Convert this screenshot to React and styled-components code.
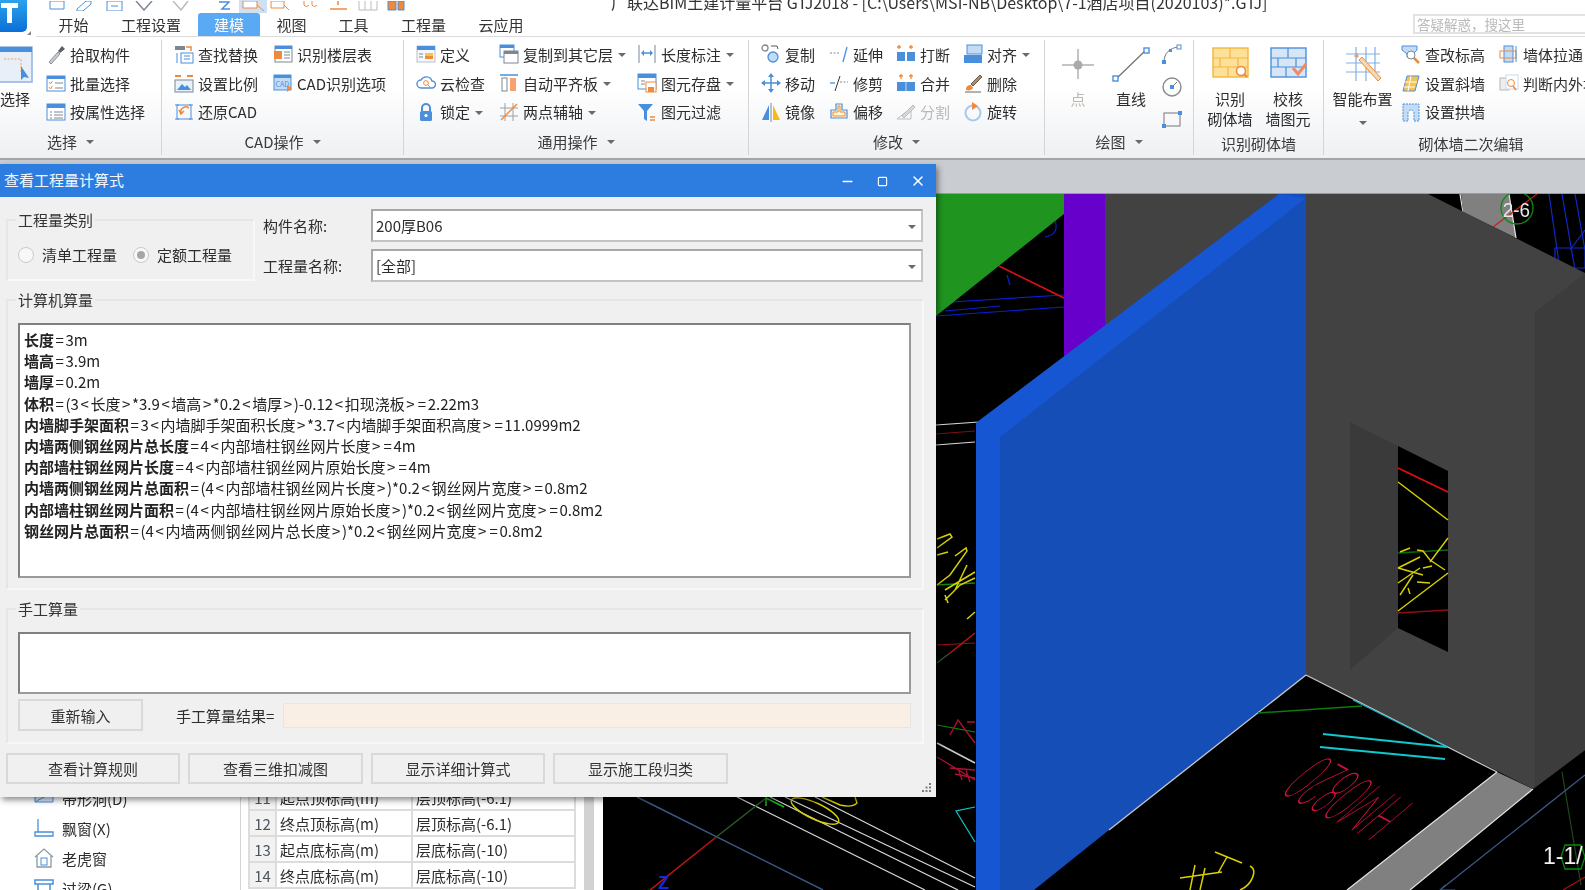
import React from "react";
import styled, { createGlobalStyle } from "styled-components";
import { Minus, Square, X } from "lucide-react";

const GlobalStyle = createGlobalStyle`
  html, body {
    margin: 0;
    padding: 0;
    background: #fff;
    overflow: hidden;
  }
  body {
    font-family: "Noto Sans CJK SC", "Noto Sans", sans-serif;
    font-size: 15px;
    color: #2d2d2d;
  }
`;

const Page = styled.div`
  position: relative;
  width: 1585px;
  height: 890px;
  overflow: hidden;
  display: flex;
  flex-direction: column;
  filter: blur(0.5px);
`;

const Top = styled.div`
  display: flex;
  height: 37px;
  flex: none;
`;

const LogoBox = styled.div`
  position: relative;
  width: 36px;
  flex: none;
`;

const Right = styled.div`
  flex: 1;
  display: flex;
  flex-direction: column;
  min-width: 0;
  border-bottom: 1px solid #dcdcdc;
`;

const Quick = styled.div`
  height: 13px;
  display: flex;
  align-items: flex-end;
  overflow: hidden;
  padding-left: 13px;
  flex: none;
`;

const QuickSlot = styled.span`
  display: flex;
  justify-content: center;
  align-items: flex-end;
  flex: none;
  width: ${(p) => p.$w}px;
  margin-left: ${(p) => p.$gap || 0}px;
  height: 20px;
  padding-bottom: 2px;
  box-sizing: border-box;
  background: ${(p) => (p.$on ? "#cfe0f3" : "transparent")};
`;

const Title = styled.span`
  margin-left: 206px;
  line-height: 22px;
  font-size: 16px;
  white-space: nowrap;
  color: #333;
`;

const TabRow = styled.div`
  flex: 1;
  display: flex;
  padding-left: 7px;
  align-items: stretch;
`;

const Tab = styled.div`
  width: ${(p) => p.$w}px;
  margin-right: 1px;
  display: flex;
  align-items: center;
  justify-content: center;
  border-radius: 3px 3px 0 0;
  background: ${(p) => (p.$on ? "#5aa9f5" : "transparent")};
  color: ${(p) => (p.$on ? "#fff" : "#333")};
`;

const Search = styled.div`
  margin-left: auto;
  width: 172px;
  height: 20px;
  margin-top: 1px;
  box-sizing: border-box;
  border: 2px solid #e2e2e2;
  border-right: none;
  padding-left: 2px;
  font-size: 13.5px;
  line-height: 16px;
  color: #b9b9b9;
`;

const Ribbon = styled.div`
  height: 121px;
  flex: none;
  display: flex;
  padding-top: 3px;
  box-sizing: border-box;
  background: linear-gradient(#fff 40%, #eef0f2);
  overflow: hidden;
`;

const RibbonEdge = styled.div`
  height: 2px;
  flex: none;
  background: #a3a6a9;
`;

const Section = styled.section`
  width: ${(p) => p.$w}px;
  flex: none;
  box-sizing: border-box;
  border-right: ${(p) => (p.$last ? "none" : "1px solid #d3d5d8")};
  display: flex;
  flex-direction: column;
  margin-bottom: 3px;
`;

const SectionBody = styled.div`
  height: 91px;
  display: flex;
  padding-left: ${(p) => p.$pl || 0}px;
`;

const SectionLabel = styled.div`
  height: 20px;
  margin-top: ${(p) => (p.$low ? 2 : 0)}px;
  padding-right: ${(p) => p.$pr || 0}px;
  display: flex;
  align-items: center;
  justify-content: center;
  gap: ${(p) => p.$gap ?? 6}px;
  color: #3a3a3a;
`;

const Caret = styled.i`
  display: inline-block;
  width: 0;
  height: 0;
  margin-left: ${(p) => p.$ml ?? 3}px;
  margin-top: 2px;
  border-left: 4px solid transparent;
  border-right: 4px solid transparent;
  border-top: 4px solid #6a6a6a;
`;

const ToolCol = styled.div`
  width: ${(p) => p.$w}px;
  flex: none;
`;

const Tool = styled.div`
  height: 28.7px;
  display: flex;
  align-items: center;
  gap: 4px;
  white-space: nowrap;
  color: ${(p) => (p.$off ? "#b8b8b8" : "#2d2d2d")};
`;

const BigTool = styled.div`
  width: ${(p) => p.$w}px;
  flex: none;
  text-align: center;
  line-height: 20px;
  color: ${(p) => (p.$off ? "#c2b8b0" : "#2d2d2d")};
`;

const BigIcon = styled.div`
  height: 49px;
  display: flex;
  align-items: ${(p) => (p.$pin ? "flex-start" : "center")};
  justify-content: ${(p) => (p.$pin ? "flex-start" : "center")};
  padding-top: ${(p) => (p.$pin ? 6 : 0)}px;
  box-sizing: border-box;
`;

const BigLeft = styled.div`
  text-align: left;
`;

const SideIcons = styled.div`
  display: flex;
  flex-direction: column;
  height: 88px;
  justify-content: space-between;
  padding-top: 3px;
  margin-left: 2px;
`;

const GrayBar = styled.div`
  height: 33px;
  flex: none;
  background: #c9ccd1;
`;

const Work = styled.div`
  flex: 1;
  display: flex;
  min-height: 0;
  border-top: 1px solid #9a9a9a;
`;

const Tree = styled.div`
  width: 241px;
  flex: none;
  box-sizing: border-box;
  border-right: 1px solid #d5d5d5;
  display: flex;
  flex-direction: column;
  justify-content: flex-end;
  overflow: hidden;
  padding-left: 34px;
`;

const TreeRow = styled.div`
  height: 30px;
  flex: none;
  display: flex;
  align-items: center;
  gap: 8px;
  margin-bottom: ${(p) => (p.$end ? -13 : 0)}px;
`;

const Props = styled.div`
  width: 362px;
  flex: none;
  display: flex;
  background: #fff;
  padding-left: 7px;
  box-sizing: border-box;
`;

const PropTable = styled.div`
  width: 328px;
  display: flex;
  flex-direction: column;
  justify-content: flex-end;
  padding-bottom: 1px;
`;

const PropRow = styled.div`
  height: 26px;
  display: grid;
  grid-template-columns: 27px 136px 1fr;
  box-sizing: border-box;
  border-top: 2px solid #dcdcdc;
  &:last-child {
    border-bottom: 2px solid #dcdcdc;
    height: 28px;
  }
`;

const PropCell = styled.div`
  display: flex;
  align-items: center;
  justify-content: ${(p) => (p.$num ? "center" : "flex-start")};
  padding-left: ${(p) => (p.$num ? 0 : 3)}px;
  border-left: 2px solid #dcdcdc;
  border-right: ${(p) => (p.$end ? "2px solid #dcdcdc" : "none")};
  background: ${(p) => (p.$num ? "#f2f2f2" : "#fff")};
  color: ${(p) => (p.$num ? "#4b5560" : "#2d2d2d")};
  white-space: nowrap;
  overflow: hidden;
`;

const Scroll = styled.div`
  width: 10px;
  flex: none;
  margin-left: 8px;
  background: #d2d2d2;
`;

const Canvas = styled.div`
  flex: 1;
  background: #000;
  overflow: hidden;
  svg {
    display: block;
  }
`;

const Dialog = styled.div`
  position: absolute;
  left: 0;
  top: 164px;
  width: 936px;
  height: 633px;
  background: #f0f0f0;
  box-shadow: 2px 3px 6px rgba(0, 0, 0, 0.45);
  display: flex;
  flex-direction: column;
`;

const DialogBar = styled.div`
  height: 33px;
  flex: none;
  background: #2d7de0;
  color: #f2f7fd;
  display: flex;
  align-items: center;
  padding: 0 0 2px 4px;
  box-sizing: border-box;
`;

const BarButtons = styled.div`
  margin-left: auto;
  display: flex;
  align-items: center;
  gap: 22px;
  padding: 3px 10px 0 0;
`;

const DialogBody = styled.div`
  flex: 1;
  padding: 13px 12px 0 6px;
  position: relative;
  display: flex;
  flex-direction: column;
`;

const TopPart = styled.div`
  display: flex;
  height: 80px;
`;

const Frame = styled.fieldset`
  margin: 0;
  padding: 0;
  box-sizing: border-box;
  border: 2px solid #f8f8f8;
  border-top-color: #e6e6e6;
  border-left-color: #e6e6e6;
  width: ${(p) => p.$w}px;
  height: ${(p) => p.$h}px;
  margin-top: ${(p) => p.$mt || 0}px;
  min-width: 0;
  flex: none;
  legend {
    margin-left: 8px;
    padding: 0 2px;
    line-height: 20px;
    color: #333;
  }
`;

const RadioRow = styled.div`
  display: flex;
  align-items: center;
  padding: 14px 0 0 10px;
`;

const Radio = styled.span`
  width: 14px;
  height: 14px;
  border-radius: 50%;
  border: 1px solid #c8c8c8;
  background: #f8f8f8;
  position: relative;
  flex: none;
  margin-left: ${(p) => p.$ml || 0}px;
  margin-right: 8px;
  &::after {
    content: "";
    display: ${(p) => (p.$on ? "block" : "none")};
    position: absolute;
    inset: 3px;
    border-radius: 50%;
    background: #a6a6a6;
  }
`;

const Fields = styled.div`
  margin-left: 8px;
  margin-top: -1px;
  flex: 1;
  display: flex;
  flex-direction: column;
  gap: 7px;
`;

const Field = styled.div`
  display: flex;
  align-items: center;
  height: 33px;
`;

const FieldName = styled.span`
  width: 108px;
  flex: none;
`;

const Combo = styled.div`
  width: 552px;
  height: 100%;
  box-sizing: border-box;
  background: #fff;
  border: 2px solid #c4c4c4;
  border-top-color: #a8a8a8;
  border-left-color: #a8a8a8;
  display: flex;
  align-items: center;
  padding: 0 5px 0 3px;
  justify-content: space-between;
`;

const Sheet = styled.div`
  background: #fff;
  box-sizing: border-box;
  border: 2px solid #808080;
  border-right-color: #9a9a9a;
  border-bottom-color: #9a9a9a;
  width: 893px;
  height: ${(p) => p.$h}px;
  margin-left: 10px;
  margin-top: ${(p) => p.$mt || 0}px;
  padding: 4px 4px;
  line-height: 21.2px;
  white-space: nowrap;
  color: #222;
`;

const Name = styled.b`
  font-weight: 700;
`;

const Sym = styled.span`
  margin: 0 1.6px;
`;

const ManualRow = styled.div`
  display: flex;
  align-items: center;
  height: 32px;
  margin-top: 5px;
  margin-left: 10px;
`;

const FlatButton = styled.div`
  width: ${(p) => p.$w}px;
  height: ${(p) => p.$h || 31}px;
  flex: none;
  box-sizing: border-box;
  border: 2px solid #d9d9d9;
  display: flex;
  align-items: center;
  justify-content: center;
  margin-right: ${(p) => p.$mr || 0}px;
  color: #333;
`;

const ResultLabel = styled.span`
  margin-left: 33px;
  width: 107px;
  flex: none;
  white-space: nowrap;
`;

const ResultBox = styled.div`
  width: 628px;
  height: 25px;
  box-sizing: border-box;
  background: #f9efe5;
  border: 1px solid #e6e6e6;
`;

const Footer = styled.div`
  display: flex;
  margin-top: 9px;
`;

const Grip = styled.span`
  position: absolute;
  right: 4px;
  bottom: 4px;
  line-height: 0;
`;

/* ribbon icons */
const B = "#4a8fdc";
const L = "#c3dbf4";
const O = "#ef8a3c";
const D = "#7b8794";
const Y = "#f7c24e";

const icons = {
  pick: (<><path d="M3 18l9-10 2 2-9 10z" fill="#c9ccd0" stroke="#8a8f96" /><path d="M12 7l4-5 3 3-5 4z" fill="#5b5f66" /></>),
  batch: (<><rect x="1" y="3" width="18" height="15" fill="#fff" stroke={B} /><rect x="1" y="3" width="18" height="3" fill={B} /><path d="M3 9l1.5 2 2-3M3 14l1.5 2 2-3" stroke={O} fill="none" /><path d="M9 10h8M9 15h8" stroke={D} /></>),
  attr: (<><rect x="1" y="2" width="18" height="16" fill="#fff" stroke={B} /><rect x="1" y="2" width="18" height="4" fill={B} /><path d="M4 10h2M8 10h9M4 13h2M8 13h9M4 16h2M8 16h9" stroke={D} /></>),
  find: (<><rect x="1" y="2" width="10" height="4" fill={D} /><path d="M12 3h5v4" stroke={O} fill="none" strokeWidth="1.5" /><rect x="7" y="9" width="12" height="10" fill="#fff" stroke={B} /><path d="M10 12h6M10 15h6M3 9v10" stroke={B} /></>),
  floors: (<><rect x="2" y="2" width="17" height="16" fill="#fff" stroke={D} /><rect x="2" y="2" width="17" height="3" fill={B} /><rect x="1" y="7" width="8" height="8" fill={O} /><path d="M11 8h6M11 11h6M11 14h6" stroke={D} /></>),
  scale: (<><path d="M1 3h6M13 3h6" stroke={O} strokeWidth="2" /><rect x="1" y="7" width="18" height="12" fill="#e9f1fa" stroke={D} /><path d="M3 17l5-6 3 3 2-2 4 5z" fill={B} /></>),
  cadopt: (<><rect x="1" y="2" width="17" height="15" fill={L} stroke={B} /><rect x="1" y="2" width="17" height="3" fill={B} /><text x="2.5" y="14" fontSize="7" fill={B}>CAD</text><path d="M14 12l5 3-5 4z" fill={O} /></>),
  restore: (<><rect x="3" y="3" width="14" height="14" fill="none" stroke={B} /><path d="M1 3h4M1 17h4M15 3h4M15 17h4" stroke={B} /><path d="M15 6a5 5 0 0 0-8 5M5 8l2 4 3-3" stroke={O} strokeWidth="1.6" fill="none" /></>),
  define: (<><rect x="1" y="2" width="18" height="16" fill="#f5f7fa" stroke="#b9c0c8" /><rect x="1" y="2" width="18" height="4" fill={B} /><rect x="9" y="9" width="8" height="3" fill={Y} /><rect x="9" y="12" width="8" height="3" fill={O} /><path d="M3 10h4M3 13h4" stroke={D} /></>),
  cloud: (<><path d="M5 15a4 4 0 0 1 0-8 6 6 0 0 1 11 1 3.5 3.5 0 0 1 0 7z" fill="#fff" stroke={B} strokeWidth="1.4" /><circle cx="10" cy="10" r="2.4" fill="none" stroke={O} /><path d="M12 12l2 2" stroke={O} /></>),
  lock: (<><path d="M6 9V6a4 4 0 0 1 8 0v3" fill="none" stroke={B} strokeWidth="2" /><rect x="4" y="9" width="12" height="10" rx="1.5" fill={B} /><circle cx="10" cy="13.5" r="1.6" fill="#fff" /></>),
  copylayer: (<><rect x="1" y="1" width="14" height="12" fill="#fff" stroke={B} /><rect x="1" y="1" width="14" height="3" fill={B} /><rect x="5" y="7" width="14" height="12" fill="#fff" stroke={D} /><rect x="5" y="7" width="14" height="3" fill={D} /></>),
  autoalign: (<><path d="M1 2h18" stroke={B} strokeWidth="1.5" /><rect x="3" y="5" width="5" height="13" fill="#fff" stroke={D} /><rect x="11" y="5" width="6" height="13" fill="#f7a173" /></>),
  twopoint: (<><path d="M6 1v18M14 1v18M1 6h18M1 14h18" stroke="#9aa0a7" /><path d="M2 18L18 2" stroke={O} strokeWidth="1.4" /></>),
  dim: (<><path d="M2 1v18M18 1v18" stroke={D} /><path d="M5 9h10" stroke={B} strokeWidth="1.5" /><path d="M4 9l3-3v6zM16 9l-3-3v6z" fill={B} /></>),
  save: (<><rect x="1" y="1" width="18" height="15" fill="#fff" stroke={B} /><rect x="1" y="1" width="18" height="4" fill={B} /><path d="M4 8h4M4 11h4" stroke={D} /><rect x="9" y="9" width="10" height="10" fill="#fff" stroke={O} /><rect x="11" y="14" width="6" height="5" fill={O} /></>),
  filter: (<><path d="M1 2h15l-6 7v10l-3-2V9z" fill={B} /><path d="M13 15h5M13 18h5" stroke={O} strokeWidth="1.5" /></>),
  copy: (<><circle cx="4" cy="4" r="3" fill="none" stroke={D} strokeWidth="1.3" /><circle cx="12" cy="13" r="5" fill={L} stroke={B} strokeWidth="1.3" /><path d="M10 2h6l1 3" fill="none" stroke="#555" /></>),
  extend: (<><path d="M1 9h9" stroke="#7f8a96" strokeDasharray="2 1.5" /><path d="M14 18l4-15" stroke={B} strokeWidth="1.3" /></>),
  trim: (<><path d="M1 10h5" stroke={B} strokeWidth="1.3" /><path d="M6 18l5-15" stroke="#333" /><path d="M11 9h8" stroke="#7f8a96" strokeDasharray="2 1.5" /></>),
  move: (<><path d="M10 3v14M3 10h14" stroke={B} strokeWidth="1.5" /><path d="M10 0l3 4H7zM10 20l3-4H7zM0 10l4-3v6zM20 10l-4-3v6z" fill={B} /></>),
  mirror: (<><path d="M8 3v15H1z" fill={B} /><path d="M10 1v19" stroke={D} /><path d="M12 3v15h7z" fill="#fdb913" /></>),
  offset: (<><path d="M7 2h6v6h5v8H2V8h5z" fill="#fff6d8" stroke={B} strokeWidth="1.2" /><path d="M9 4h2v6h5v4H4v-4h5z" fill="none" stroke={O} /></>),
  breakit: (<><path d="M3 1v4M1 3h4M15 1v4M13 3h4" stroke={O} strokeWidth="1.3" /><rect x="1" y="8" width="8" height="9" fill={B} /><rect x="11" y="8" width="8" height="9" fill={B} /></>),
  merge: (<><path d="M5 1v5M3 3h4M15 1v5M13 3h4" stroke={O} strokeWidth="1.3" /><rect x="1" y="9" width="18" height="9" fill={B} /><path d="M10 9v9" stroke={L} /></>),
  split: (<><path d="M1 17h14L15 6z" fill="none" stroke="#b9bcc0" /><path d="M6 14L17 3l2 2L8 16z" fill="#d6d8da" stroke="#b9bcc0" /></>),
  align: (<><rect x="4" y="1" width="15" height="9" fill={L} stroke={B} /><rect x="1" y="11" width="18" height="8" fill={B} /></>),
  del: (<><path d="M2 19h16" stroke="#666" /><path d="M3 17c0-4 2-5 5-5l2 3c-1 2-4 3-7 2z" fill={O} /><path d="M8 11l9-9 2 2-9 9z" fill="#a88d70" stroke="#6a5a48" /></>),
  rotate: (<><circle cx="10" cy="11" r="7.5" fill="none" stroke="#a8c9ee" strokeWidth="2" /><path d="M9 0l6 4-6 4z" fill={O} /></>),
  point: (<><path d="M18 2v30M2 18h32" stroke="#c4c4c4" strokeWidth="2" /><circle cx="18" cy="18" r="4.5" fill="#aaa" /></>),
  line: (<><path d="M4 33L34 4" stroke="#707070" strokeWidth="1.2" /><rect x="1" y="30" width="5" height="5" fill="#fff" stroke={B} strokeWidth="1.4" /><rect x="32" y="2" width="5" height="5" fill="#fff" stroke={B} strokeWidth="1.4" /></>),
  arc: (<><path d="M3 19c0-9 6-14 14-15" fill="none" stroke="#777" /><rect x="1" y="17" width="4" height="4" fill={B} /><rect x="8" y="6" width="3" height="3" fill={B} /><rect x="16" y="2" width="4" height="4" fill="#fff" stroke={B} /></>),
  circle: (<><circle cx="11" cy="11" r="9" fill="none" stroke="#8a8a8a" strokeWidth="1.4" /><rect x="9" y="9" width="4" height="4" fill={B} /><path d="M13 9l3-3" stroke="#777" /></>),
  rect: (<><rect x="3" y="4" width="16" height="13" fill="none" stroke="#777" /><rect x="1" y="15" width="4" height="4" fill={B} /><rect x="17" y="2" width="4" height="4" fill={B} /></>),
  wallFind: (<><rect x="1" y="2" width="35" height="29" fill="#fde09a" stroke="#f4b73b" strokeWidth="1.4" /><path d="M1 12h35M1 21h35M18 2v10M8 12v9M26 12v9M16 21v10" stroke="#f4b73b" strokeWidth="1.2" /><circle cx="29" cy="25" r="4.5" fill="#fff" stroke={O} strokeWidth="1.6" /><path d="M32 28l3 3" stroke={O} strokeWidth="2" /></>),
  wallCheck: (<><rect x="1" y="2" width="35" height="29" fill="#d7e6f7" stroke={B} strokeWidth="1.4" /><path d="M1 12h35M1 21h35M18 2v10M8 12v9M26 12v9M16 21v10" stroke={B} strokeWidth="1.2" /><path d="M23 22l5 6 8-10" fill="none" stroke="#f08a62" strokeWidth="3" /></>),
  smart: (<><path d="M3 9h34M3 18h34M3 27h34M13 2v34M23 2v34M32 2v26" stroke="#7fb1e6" strokeWidth="1.2" /><path d="M16 15l19 21 3-3L19 12z" fill="#f3d9b0" stroke={O} /><path d="M14 8v5M11 11h5" stroke={O} /></>),
  elev: (<><path d="M1 2h15v4l-4 4v3H6v-3L1 6z" fill={L} stroke={B} /><circle cx="10" cy="11" r="4" fill="#fff" stroke={D} /><path d="M13 14l5 5" stroke={O} strokeWidth="2.5" /></>),
  slant: (<><path d="M6 3h12l-4 15H2z" fill={Y} stroke={B} /><path d="M4 9h12M3 14h11M10 3L7 18" stroke="#fff" /></>),
  arch: (<><path d="M2 2h16v17h-5v-8a3 3 0 0 0-6 0v8H2z" fill={L} stroke={B} strokeDasharray="2 1" /></>),
  pull: (<><rect x="5" y="2" width="9" height="16" fill={L} stroke={B} /><rect x="1" y="7" width="16" height="7" fill="none" stroke={O} /><path d="M17 2v16" stroke={B} /></>),
  inout: (<><rect x="1" y="5" width="9" height="12" fill="#eee" stroke="#b0b8c0" /><rect x="7" y="2" width="12" height="14" fill="#fff" stroke={L} /><circle cx="12" cy="10" r="3.5" fill="none" stroke={O} /><path d="M14 13l3 4" stroke={O} strokeWidth="1.6" /></>),
  band: (<><path d="M1 2h18v12H1z" fill="#dce9f8" stroke={B} /><path d="M1 14L19 4" stroke={B} /></>),
  bay: (<><path d="M4 1v13h12M1 14h18v4H1z" fill="none" stroke={B} strokeWidth="1.3" /></>),
  dormer: (<><path d="M1 9l9-8 9 8M3 8v11h14V8" fill="none" stroke="#8a9aa8" strokeWidth="1.3" /><rect x="7" y="10" width="6" height="7" fill="none" stroke={B} /></>),
  lintel: (<><path d="M1 2h18v4H1zM4 6v12M16 6v12" fill="none" stroke={B} strokeWidth="1.5" /></>),
};

const Ico = ({ n, s = 20, box = 20 }) => (
  <svg width={s} height={s} viewBox={`0 0 ${box} ${box}`} style={{ flex: "none" }}>
    {icons[n]}
  </svg>
);

const T = ({ n, t, arrow, off }) => (
  <Tool $off={off}>
    <Ico n={n} />
    {t}
    {arrow && <Caret $ml={1} />}
  </Tool>
);

const quickItems = [
  { w: 16, g: 0, d: <path d="M1 0h14v8H1z" fill="#fff" stroke={B} /> },
  { w: 16, g: 11, d: <path d="M1 8L10 0h5v3L7 10H1z" fill="#fff" stroke={B} /> },
  { w: 17, g: 14, d: <path d="M1 0h15v10H1zM5 5h7" fill="#fff" stroke={B} /> },
  { w: 19, g: 12, d: <path d="M1 0l8 9 8-9" fill="none" stroke={D} strokeWidth="1.5" /> },
  { w: 17, g: 18, d: <path d="M1 0l8 9 7-9" fill="none" stroke="#bbb" strokeWidth="1.5" /> },
  { w: 12, g: 29, d: <path d="M1 1h10L4 8h8" fill="none" stroke={B} strokeWidth="1.5" /> },
  { w: 28, g: 9, on: true, d: <path d="M4 0h14v7H4zM18 4l7 6" fill="#fff" stroke={O} /> },
  { w: 20, g: 3, d: <path d="M1 0h13v7H1zM14 4l5 5" fill="#fff" stroke={O} /> },
  { w: 20, g: 10, d: <path d="M4 0v4a3 3 0 0 0 5 0M12 0v4a3 3 0 0 0 5 0" fill="none" stroke={O} /> },
  { w: 19, g: 9, d: <path d="M9 0v4M1 8h17" stroke={O} strokeWidth="1.5" /> },
  { w: 20, g: 10, d: <path d="M1 0v9h18V0M7 0v9M13 0v9" fill="none" stroke="#bbb" /> },
  { w: 18, g: 9, d: <path d="M1 0h8v9H1z M11 0h6v9h-6z" fill={O} stroke={B} /> },
];

const lines = [
  ["长度", "=3m"],
  ["墙高", "=3.9m"],
  ["墙厚", "=0.2m"],
  ["体积", "=(3<长度>*3.9<墙高>*0.2<墙厚>)-0.12<扣现浇板>=2.22m3"],
  ["内墙脚手架面积", "=3<内墙脚手架面积长度>*3.7<内墙脚手架面积高度>=11.0999m2"],
  ["内墙两侧钢丝网片总长度", "=4<内部墙柱钢丝网片长度>=4m"],
  ["内部墙柱钢丝网片长度", "=4<内部墙柱钢丝网片原始长度>=4m"],
  ["内墙两侧钢丝网片总面积", "=(4<内部墙柱钢丝网片长度>)*0.2<钢丝网片宽度>=0.8m2"],
  ["内部墙柱钢丝网片面积", "=(4<内部墙柱钢丝网片原始长度>)*0.2<钢丝网片宽度>=0.8m2"],
  ["钢丝网片总面积", "=(4<内墙两侧钢丝网片总长度>)*0.2<钢丝网片宽度>=0.8m2"],
];

const rows = [
  ["11", "起点顶标高(m)", "层顶标高(-6.1)"],
  ["12", "终点顶标高(m)", "层顶标高(-6.1)"],
  ["13", "起点底标高(m)", "层底标高(-10)"],
  ["14", "终点底标高(m)", "层底标高(-10)"],
];

// the = < > signs sit wider in the original font
const spaced = (text) =>
  text.split(/([=<>])/).map((part, i) => (/^[=<>]$/.test(part) ? <Sym key={i}>{part}</Sym> : part));

function CadView() {
  return (
    <svg width="982" height="696" viewBox="603 194 982 696">
      <rect x="603" y="194" width="982" height="696" fill="#000" />
      {/* cad linework */}
      <g fill="none" strokeWidth="1.2">
        <path d="M737 797L925 890M770 797L958 890M785 797L975 887M815 797L975 878" stroke="#d8d8d8" />
        <path d="M637 797L823 890" stroke="#3a5a86" strokeWidth="1.4" />
        <path d="M766 798L715 838" stroke="#2c5a2c" strokeWidth="1.4" />
        <path d="M715 838L650 890" stroke="#c01414" strokeWidth="1.6" />
        <path d="M784 807L766 798L766 806" stroke="#16c016" strokeWidth="1.4" />
        <ellipse cx="815" cy="811" rx="26" ry="8" stroke="#d8d000" strokeWidth="1.4" transform="rotate(25 815 811)" />
        <path d="M822 797L840 805Q852 808 857 803L855 797" stroke="#d8d000" strokeWidth="1.4" />
        <path d="M975 807L956 811L975 842" stroke="#10c8c8" />
        <path d="M936 316L1064 307M951 302L1064 295M945 311L1000 306" stroke="#0a1fd0" />
        <path d="M999 266L1064 298" stroke="#e01010" strokeWidth="1.5" />
        <path d="M1007 275L1010 285M1055 220c3 10 0 15-10 17" stroke="#0a1fd0" />
        <path d="M936 425L979 422M936 445L975 442" stroke="#d8d8d8" />
        <path d="M936 434L975 431" stroke="#7a1010" />
        <path d="M937 645L975 643" stroke="#a01010" />
        <path d="M950 653L975 633" stroke="#c01414" strokeWidth="1.5" />
        <path d="M937 663L950 653" stroke="#2c5a2c" />
        <path d="M937 585L975 583" stroke="#0c8a0c" strokeWidth="1.5" />
        <path d="M937 725L975 732" stroke="#0c8a0c" />
        <path d="M950 735L958 720L975 743M967 722H975" stroke="#b01030" strokeWidth="1.3" />
        <path d="M937 743L975 763" stroke="#c8c8c8" strokeWidth="1.6" />
        <path d="M937 757L975 780M950 768L975 770M955 774L975 778M958 768L962 780M966 770L970 782" stroke="#b01030" strokeWidth="1.3" />
        <path d="M937 539L950 534L952 537L937 548M937 555L948 552M955 556L966 548L967 551L950 575L937 585M967 565L955 590M945 590L975 572M945 600L960 585L975 578M945 595L948 603M967 619L975 612" stroke="#d8d000" strokeWidth="1.5" />
        <path d="M1460 194L1463 212" stroke="#e8e8e8" />
        <path d="M1549 194L1560 270M1562 194L1575 270M1575 194L1585 250" stroke="#1028c8" />
        <path d="M1555 268h30v-20h-30zM1570 250l15-20" stroke="#1028c8" />
      </g>
      <polygon points="936,194 1089,194 936,316" fill="#1f951f" />
      <rect x="1064" y="194" width="41" height="170" fill="#6800cc" />
      <polygon points="1105,194 1306,194 1105,358" fill="#424242" />
      {/* grey slabs */}
      <polygon points="1461,194 1509,194 1516,238 1463,212" fill="#808080" />
      <polygon points="1497,772 1533,789 1410,890 1347,890" fill="#808080" />
      <path d="M1509 194L1516 238M1497 772L1347 890M1533 789L1410 890" stroke="#e4e4e4" strokeWidth="1.2" fill="none" />
      {/* wall */}
      <polygon points="1306,194 1428,194 1585,273 1585,750 1533,789 1306,675" fill="#424242" />
      <polygon points="1585,273 1535,312 1535,788 1533,789 1585,750" fill="#3c3c3c" />
      <polygon points="1350,422 1398,446 1398,628 1350,670" fill="#3a3a3a" />
      <polygon points="1398,446 1448,471 1448,652 1398,628" fill="#000" />
      <g fill="none" strokeWidth="1.4">
        <path d="M1398 468L1448 492" stroke="#e01010" strokeWidth="1.7" />
        <path d="M1398 482L1448 520" stroke="#d8d000" />
        <path d="M1398 553L1448 550" stroke="#0c6a0c" />
        <path d="M1398 613L1448 610" stroke="#8a1010" />
        <path d="M1398 611L1448 573M1430 562L1448 538M1400 552L1410 548M1417 550L1423 551L1430 560L1445 570M1398 568L1420 557M1398 568L1423 575M1398 583L1420 568M1400 595L1413 575M1408 588L1410 594M1417 582L1430 583M1423 568L1432 566" stroke="#d8d000" />
      </g>
      {/* blue slab */}
      <polygon points="976,423 1279,194 1306,194 1306,675 1109,830 1034,890 976,890" fill="#164eb8" />
      <polygon points="976,423 1279,194 1306,198 1000,437 1000,890 976,890" fill="#1656d2" />
      {/* bottom linework */}
      <g fill="none">
        <path d="M1306 675L1497 772" stroke="#c8c8c8" strokeWidth="1.3" />
        <path d="M1306 675L1109 830" stroke="#c8c8c8" strokeWidth="1.3" />
        <path d="M1353 700L1447 747" stroke="#10b8c8" strokeWidth="1.2" />
        <path d="M1323 734L1447 747M1320 747L1445 759" stroke="#10c8d0" strokeWidth="1.8" />
        <path d="M1258 713L1362 706" stroke="#0c7a0c" strokeWidth="1.4" />
        <path d="M1562 772L1581 885" stroke="#1c4a1c" strokeWidth="1.2" />
        <path d="M1585 775L1440 890" stroke="#3a5a86" strokeWidth="1.3" />
        <path d="M1445 885L1440 890L1455 890" stroke="#3a5a86" />
        <path d="M1215 852L1242 863M1227 857L1218 873M1180 878L1222 872M1195 865L1190 890M1205 868L1200 890M1250 866C1258 870 1252 885 1240 890" stroke="#d8d000" strokeWidth="1.5" />
        <path d="M1585 877L1563 890" stroke="#a01010" strokeWidth="1.3" />
        <path d="M1493 227L1537 194" stroke="#d01818" strokeWidth="1.1" />
        <circle cx="1517" cy="208" r="16" stroke="#0a8a0a" strokeWidth="1.3" />
      </g>
      <text transform="matrix(-1.164 -0.62 3.07 -2.58 1415 805)" fill="#d0103c" stroke="#d0103c" strokeWidth="0.7" vectorEffect="non-scaling-stroke" fontFamily="Lato, sans-serif" fontWeight="100" fontSize="20">
        HM0820
      </text>
      <text x="1503" y="217" fill="#e8e8e8" fontFamily="Liberation Sans, sans-serif" fontSize="21" transform="translate(150 0) scale(0.9 1)">
        2-6
      </text>
      <polygon points="1565,845 1581,845 1585,857 1581,869 1565,869 1561,857" fill="none" stroke="#0a8a0a" strokeWidth="1.3" />
      <text x="1543" y="864" fill="#f0f0f0" fontFamily="Liberation Sans, sans-serif" fontSize="23">
        1-1/
      </text>
      <text x="658" y="889" fill="#1028e8" fontFamily="Liberation Sans, sans-serif" fontSize="18" fontWeight="700">
        Z
      </text>
    </svg>
  );
}

export default function App() {
  return (
    <Page>
      <GlobalStyle />
      <Top>
        <LogoBox>
          <svg width="36" height="37" viewBox="0 0 36 37">
            <defs>
              <linearGradient id="lg" x1="0" y1="0" x2="0" y2="1">
                <stop offset="0" stopColor="#36b2f2" />
                <stop offset="1" stopColor="#0a6fd8" />
              </linearGradient>
            </defs>
            <rect x="-8" y="-10" width="35" height="42" rx="5" fill="url(#lg)" />
            <path d="M1 3h17v5h-6v15H7V8H1z" fill="#fff" />
            <path d="M27 35l4-4v4z" fill="#888" />
          </svg>
        </LogoBox>
        <Right>
          <Quick>
            {quickItems.map((q, i) => (
              <QuickSlot key={i} $w={q.w} $gap={q.g} $on={q.on}>
                <svg width={q.w} height="10" viewBox={`0 0 ${q.w} 10`}>
                  {q.d}
                </svg>
              </QuickSlot>
            ))}
            <Title>广联达BIM土建计量平台 GTJ2018 - [C:\Users\MSI-NB\Desktop\7-1酒店项目(2020103)*.GTJ]</Title>
          </Quick>
          <TabRow>
            <Tab $w={61}>开始</Tab>
            <Tab $w={92}>工程设置</Tab>
            <Tab $w={62} $on>建模</Tab>
            <Tab $w={61}>视图</Tab>
            <Tab $w={61}>工具</Tab>
            <Tab $w={77}>工程量</Tab>
            <Tab $w={76}>云应用</Tab>
            <Search>答疑解惑，搜这里</Search>
          </TabRow>
        </Right>
      </Top>

      <Ribbon>
        <Section $w={162}>
          <SectionBody>
            <BigTool $w={46}>
              <BigIcon $pin>
                <svg width="33" height="37" viewBox="0 0 33 37">
                  <rect x="-3" y="1" width="35" height="35" fill="#e8eff8" stroke="#8db4e2" strokeWidth="1.5" />
                  <rect x="-3" y="1" width="35" height="5" fill={B} />
                  <path d="M4 13h17v13" fill="none" stroke="#f4a640" strokeDasharray="2 1.5" />
                  <path d="M21 20v14l3-3 5 1z" fill={B} />
                </svg>
              </BigIcon>
              <BigLeft>选择</BigLeft>
            </BigTool>
            <ToolCol $w={110}>
              <T n="pick" t="拾取构件" />
              <T n="batch" t="批量选择" />
              <T n="attr" t="按属性选择" />
            </ToolCol>
          </SectionBody>
          <SectionLabel $pr={20}>选择<Caret /></SectionLabel>
        </Section>

        <Section $w={242}>
          <SectionBody $pl={12}>
            <ToolCol $w={99}>
              <T n="find" t="查找替换" />
              <T n="scale" t="设置比例" />
              <T n="restore" t="还原CAD" />
            </ToolCol>
            <ToolCol $w={125}>
              <T n="floors" t="识别楼层表" />
              <T n="cadopt" t="CAD识别选项" />
            </ToolCol>
          </SectionBody>
          <SectionLabel>CAD操作<Caret /></SectionLabel>
        </Section>

        <Section $w={345}>
          <SectionBody $pl={12}>
            <ToolCol $w={83}>
              <T n="define" t="定义" />
              <T n="cloud" t="云检查" />
              <T n="lock" t="锁定" arrow />
            </ToolCol>
            <ToolCol $w={138}>
              <T n="copylayer" t="复制到其它层" arrow />
              <T n="autoalign" t="自动平齐板" arrow />
              <T n="twopoint" t="两点辅轴" arrow />
            </ToolCol>
            <ToolCol $w={108}>
              <T n="dim" t="长度标注" arrow />
              <T n="save" t="图元存盘" arrow />
              <T n="filter" t="图元过滤" />
            </ToolCol>
          </SectionBody>
          <SectionLabel>通用操作<Caret /></SectionLabel>
        </Section>

        <Section $w={296}>
          <SectionBody $pl={12}>
            <ToolCol $w={68}>
              <T n="copy" t="复制" />
              <T n="move" t="移动" />
              <T n="mirror" t="镜像" />
            </ToolCol>
            <ToolCol $w={67}>
              <T n="extend" t="延伸" />
              <T n="trim" t="修剪" />
              <T n="offset" t="偏移" />
            </ToolCol>
            <ToolCol $w={67}>
              <T n="breakit" t="打断" />
              <T n="merge" t="合并" />
              <T n="split" t="分割" off />
            </ToolCol>
            <ToolCol $w={80}>
              <T n="align" t="对齐" arrow />
              <T n="del" t="删除" />
              <T n="rotate" t="旋转" />
            </ToolCol>
          </SectionBody>
          <SectionLabel>修改<Caret /></SectionLabel>
        </Section>

        <Section $w={149}>
          <SectionBody $pl={8}>
            <BigTool $w={50} $off>
              <BigIcon><Ico n="point" s={36} box={36} /></BigIcon>
              点
            </BigTool>
            <BigTool $w={56}>
              <BigIcon><Ico n="line" s={38} box={38} /></BigIcon>
              直线
            </BigTool>
            <SideIcons>
              <Ico n="arc" s={22} box={22} />
              <Ico n="circle" s={22} box={22} />
              <Ico n="rect" s={22} box={22} />
            </SideIcons>
          </SectionBody>
          <SectionLabel>绘图<Caret /></SectionLabel>
        </Section>

        <Section $w={130}>
          <SectionBody $pl={7}>
            <BigTool $w={58}>
              <BigIcon><Ico n="wallFind" s={37} box={37} /></BigIcon>
              识别<br />砌体墙
            </BigTool>
            <BigTool $w={58}>
              <BigIcon><Ico n="wallCheck" s={37} box={37} /></BigIcon>
              校核<br />墙图元
            </BigTool>
          </SectionBody>
          <SectionLabel $low>识别砌体墙</SectionLabel>
        </Section>

        <Section $w={294} $last>
          <SectionBody>
            <BigTool $w={77}>
              <BigIcon><Ico n="smart" s={40} box={40} /></BigIcon>
              智能布置<br /><Caret $ml={0} />
            </BigTool>
            <ToolCol $w={98}>
              <T n="elev" t="查改标高" />
              <T n="slant" t="设置斜墙" />
              <T n="arch" t="设置拱墙" />
            </ToolCol>
            <ToolCol $w={90}>
              <T n="pull" t="墙体拉通" />
              <T n="inout" t="判断内外墙" />
            </ToolCol>
          </SectionBody>
          <SectionLabel $low>砌体墙二次编辑</SectionLabel>
        </Section>
      </Ribbon>
      <RibbonEdge />
      <GrayBar />

      <Work>
        <Tree>
          <TreeRow><Ico n="band" />带形洞(D)</TreeRow>
          <TreeRow><Ico n="bay" />飘窗(X)</TreeRow>
          <TreeRow><Ico n="dormer" />老虎窗</TreeRow>
          <TreeRow $end><Ico n="lintel" />过梁(G)</TreeRow>
        </Tree>
        <Props>
          <PropTable>
            {rows.map((r) => (
              <PropRow key={r[0]}>
                <PropCell $num>{r[0]}</PropCell>
                <PropCell>{r[1]}</PropCell>
                <PropCell $end>{r[2]}</PropCell>
              </PropRow>
            ))}
          </PropTable>
          <Scroll />
        </Props>
        <Canvas>
          <CadView />
        </Canvas>
      </Work>

      <Dialog>
        <DialogBar>
          查看工程量计算式
          <BarButtons>
            <Minus size={15} color="#fff" strokeWidth={2.2} />
            <Square size={11} color="#fff" strokeWidth={2.4} />
            <X size={16} color="#fff" strokeWidth={2.2} />
          </BarButtons>
        </DialogBar>
        <DialogBody>
          <TopPart>
            <Frame $w={249} $h={71}>
              <legend>工程量类别</legend>
              <RadioRow>
                <Radio />
                清单工程量
                <Radio $on $ml={16} />
                定额工程量
              </RadioRow>
            </Frame>
            <Fields>
              <Field>
                <FieldName>构件名称:</FieldName>
                <Combo>200厚B06<Caret $ml={0} /></Combo>
              </Field>
              <Field>
                <FieldName>工程量名称:</FieldName>
                <Combo>[全部]<Caret $ml={0} /></Combo>
              </Field>
            </Fields>
          </TopPart>
          <Frame $h={300} $w={918}>
            <legend>计算机算量</legend>
            <Sheet $h={255} $mt={13}>
              {lines.map((l) => (
                <div key={l[0]}>
                  <Name>{l[0]}</Name>
                  {spaced(l[1])}
                </div>
              ))}
            </Sheet>
          </Frame>
          <Frame $h={145} $w={918} $mt={9}>
            <legend>手工算量</legend>
            <Sheet $h={62} $mt={13} />
            <ManualRow>
              <FlatButton $w={125} $h={32}>重新输入</FlatButton>
              <ResultLabel>手工算量结果=</ResultLabel>
              <ResultBox />
            </ManualRow>
          </Frame>
          <Footer>
            <FlatButton $w={174} $mr={8}>查看计算规则</FlatButton>
            <FlatButton $w={175} $mr={8}>查看三维扣减图</FlatButton>
            <FlatButton $w={174} $mr={8}>显示详细计算式</FlatButton>
            <FlatButton $w={175}>显示施工段归类</FlatButton>
          </Footer>
          <Grip>
            <svg width="10" height="10" viewBox="0 0 10 10" fill="#7d7d7d">
              <rect x="7" y="0" width="2" height="2" />
              <rect x="3.5" y="3.5" width="2" height="2" />
              <rect x="7" y="3.5" width="2" height="2" />
              <rect x="0" y="7" width="2" height="2" />
              <rect x="3.5" y="7" width="2" height="2" />
              <rect x="7" y="7" width="2" height="2" />
            </svg>
          </Grip>
        </DialogBody>
      </Dialog>
    </Page>
  );
}
